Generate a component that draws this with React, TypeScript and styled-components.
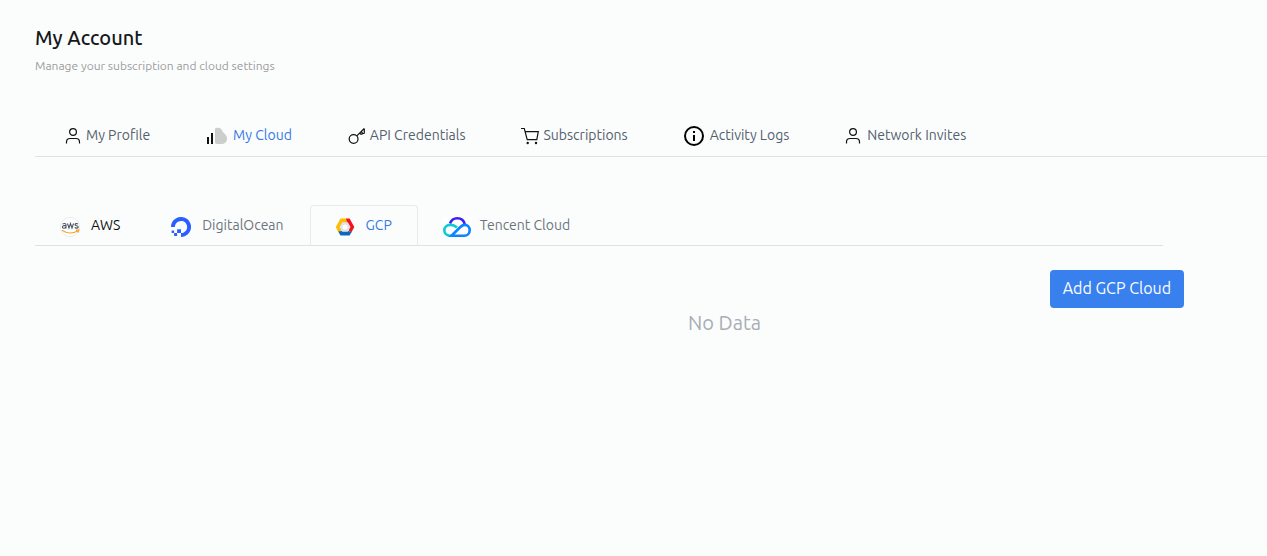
import React, { useState } from "react";
import styled, { createGlobalStyle } from "styled-components";

const GlobalStyle = createGlobalStyle`
  * { box-sizing: border-box; }
  body {
    margin: 0;
    background: #fbfdfd;
    color: #212529;
    font-family: Ubuntu, "Noto Sans", "Open Sans", sans-serif;
    font-size: 16px;
    line-height: 24px;
  }
  button { font-family: inherit; cursor: pointer; }
  svg { display: block; flex: none; }
`;

const Page = styled.main`
  padding: 24px 0 24px 35px;
`;

const Title = styled.h1`
  margin: 0;
  color: #16181b;
  font-size: 20px;
  font-weight: 500;
  line-height: 28px;
`;

const Subtitle = styled.p`
  margin: 5px 0 0;
  color: #9c9c9c;
  font-size: 12px;
  line-height: 18px;
`;

const AccountTabs = styled.nav`
  display: flex;
  gap: 56px;
  height: 42px;
  margin-top: 40px;
  padding-left: 30px;
  border-bottom: 1px solid #dee2e6;
`;

const AccountTab = styled.button<{ $active: boolean; $gap: number }>`
  display: flex;
  align-items: center;
  gap: ${(p) => p.$gap}px;
  height: 41px;
  padding: 0;
  border: 0;
  background: none;
  color: ${(p) => (p.$active ? "#3578e5" : "#55606d")};
  font-size: 14px;
  line-height: 20px;
  white-space: nowrap;
`;

const CloudTabs = styled.div`
  display: flex;
  margin: 48px 104px 0 0;
  border-bottom: 1px solid #dee2e6;
`;

const CloudTab = styled.button<{ $active: boolean; $color: string; $gap: number }>`
  display: flex;
  align-items: center;
  gap: ${(p) => p.$gap}px;
  height: 40px;
  padding: 0 25px 0 24px;
  border: 1px solid ${(p) => (p.$active ? "#e6e9ed" : "transparent")};
  border-bottom: 0;
  border-radius: 4px 4px 0 0;
  background: none;
  color: ${(p) => (p.$active ? "#3578e5" : p.$color)};
  font-size: 14px;
  line-height: 20px;
  white-space: nowrap;
`;

const IconSlot = styled.span<{ $drop: number }>`
  padding-top: ${(p) => p.$drop}px;
`;

const TabText = styled.span`
  padding-bottom: 1px;
`;

const Actions = styled.div`
  display: flex;
  justify-content: flex-end;
  margin: 24px 83px 0 0;
`;

const AddButton = styled.button`
  height: 38px;
  padding: 0 13px 2px;
  border: 0;
  border-radius: 4px;
  background: #3880ee;
  color: #fbfdfd;
  font-size: 16px;
  line-height: 24px;
  white-space: nowrap;
`;

const Empty = styled.p`
  margin: 0;
  padding-left: 147px;
  color: #a8aeb5;
  font-size: 20px;
  line-height: 30px;
  text-align: center;
`;

const UserIcon = () => (
  <svg width="16" height="16" viewBox="0 0 16 16" fill="none" stroke="#111" strokeWidth="1.2">
    <circle cx="8" cy="4" r="3.4" />
    <path d="M1.500 15.500v-1.500c0-2.200 1.200-3.500 3.500-3.500h6c2.300 0 3.500 1.300 3.500 3.500v1.500" />
  </svg>
);

const CloudIcon = () => (
  <svg width="21" height="18" viewBox="0 0 21 18">
    <path d="M1 10h2v7H1zM5 6h2v11H5z" fill="#111" />
    <path d="M9 2.200C9 .9 10.200.8 12.300.8c2.100 0 3.500 1.500 4 3 .3 1.100.8 1.600 1.800 2.400C20 7.700 21 9.400 21 11.500c0 3-2 5.500-5.200 5.500H11c-1.300 0-2-.7-2-2z" fill="#cdcdcd" />
  </svg>
);

const KeyIcon = () => (
  <svg width="18" height="18" viewBox="0 0 18 18" fill="none" stroke="#111" strokeWidth="1.2">
    <circle cx="5.600" cy="12" r="4.400" />
    <path d="M8.800 8.900 16.300 1.500M11.700 6l1.300 1.400 3.300-1.200V1.500M13.300 4.400l1.200 2" />
  </svg>
);

const CartIcon = () => (
  <svg width="18" height="18" viewBox="0 0 18 18" fill="none" stroke="#111" strokeWidth="1.200">
    <path d="M0 1.500h3.300l2.900 11.100h9.600L17.300 4.600H4.200" />
    <circle cx="6.700" cy="16" r="1.200" fill="#111" stroke="none" />
    <circle cx="15" cy="16" r="1.200" fill="#111" stroke="none" />
  </svg>
);

const InfoIcon = () => (
  <svg width="20" height="20" viewBox="0 0 20 20">
    <circle cx="10" cy="10" r="9" fill="none" stroke="#000" strokeWidth="2" />
    <path d="M9 5h2v2H9zM9 9h2v6H9z" />
  </svg>
);

const AwsIcon = () => (
  <svg width="20" height="20" viewBox="0 0 20 20">
    <circle cx="10" cy="10" r="9.600" fill="#fff" stroke="#dfe2e6" strokeWidth=".7" />
    <g fill="none" stroke="#4a5361" strokeWidth="1.100">
      <path d="M2.600 7.100C4 6.200 6 6.300 6 8v3.400M6 8.800c-2-.4-3.600 0-3.600 1.300 0 1.500 2.600 1.500 3.600 0" />
      <path d="m7.500 6.500 1.500 4.600 1.500-4.500 1.500 4.500 1.500-4.600" />
      <path d="M18 7c-1.200-.7-3-.6-3 .6 0 1.600 3.200.7 3.200 2.400 0 1.400-2.200 1.300-3.500.6" />
    </g>
    <path d="M2 13.200c4.800 3.400 11 3.400 15.500.8M16 13.100l2.800-.2-.8 2.700" fill="none" stroke="#f7a526" strokeWidth="1.300" />
  </svg>
);

const DigitalOceanIcon = () => (
  <svg width="20" height="20" viewBox="0 0 20 20" fill="#2b60ff">
    <path d="M10 20v-3.900c4.100 0 7.300-4.100 5.700-8.400a5.800 5.800 0 0 0-3.400-3.400C8 2.700 3.900 5.900 3.900 10H0C0 3.400 6.400-1.700 13.300.5c3 .9 5.300 3.300 6.200 6.200C21.700 13.600 16.600 20 10 20z" />
    <path d="M6.100 12.200H10v3.900H6.100zM3.100 16.100h3v3h-3zM.6 13.600h2.500v2.500H.6z" />
  </svg>
);

const GcpIcon = () => (
  <svg width="20" height="20" viewBox="0 0 20 20">
    <path d="M5.500 1.500h6L12 6H7.500L5.300 10l1.500 3.300-3.500 2L.800 10z" fill="#fdbd00" />
    <path d="M11 1.500h3.600L19.300 10l-3 5.500-3.100-2.500 1.600-3L12 5.600z" fill="#f2121b" />
    <path d="m3.200 14.500 3.300-.5h6.900l3.200 1-2 3.500H5.500z" fill="#0b68bb" />
    <path d="m7.200 5.300-2.700 4.700 2.700 4.700h5.600l2.700-4.700-2.700-4.700z" fill="#dfe3e6" />
    <circle cx="10" cy="10" r="2.600" fill="#fff" />
  </svg>
);

const TencentIcon = () => (
  <svg width="28" height="20" viewBox="0 0 28 20" fill="none" strokeWidth="2.600">
    <path d="M0 0h28v20H0z" fill="#fff" />
    <path d="M7 6.500C8.200 3.200 10.800 1.300 14.200 1.300c3.900 0 6.800 2.400 7.500 6" stroke="#3d1df5" />
    <path d="M14 10.500C12.300 9 10.300 7.900 7.400 7.900 3.700 7.900 1.300 10.300 1.300 13.300s2.400 5.400 5.700 5.400h2.500" stroke="#0ccbd7" />
    <path d="M8.500 18.700 17.400 10c1.300-1.300 2.600-2.100 4.300-2.100 2.900 0 5 2.300 5 5.300 0 3.200-2.200 5.500-5.400 5.500z" stroke="#0a86ff" />
  </svg>
);

const accountTabs = [
  { label: "My Profile", Icon: UserIcon, gap: 5 },
  { label: "My Cloud", Icon: CloudIcon, gap: 6 },
  { label: "API Credentials", Icon: KeyIcon, gap: 4 },
  { label: "Subscriptions", Icon: CartIcon, gap: 4 },
  { label: "Activity Logs", Icon: InfoIcon, gap: 6 },
  { label: "Network Invites", Icon: UserIcon, gap: 6 },
];

const cloudTabs = [
  { label: "AWS", Icon: AwsIcon, color: "#111", gap: 11 },
  { label: "DigitalOcean", Icon: DigitalOceanIcon, color: "#6c757d", gap: 11 },
  { label: "GCP", Icon: GcpIcon, color: "#6c757d", gap: 11 },
  { label: "Tencent Cloud", Icon: TencentIcon, color: "#6c757d", gap: 9 },
];

export default function App() {
  const [section, setSection] = useState("My Cloud");
  const [cloud, setCloud] = useState("GCP");

  return (
    <>
      <GlobalStyle />
      <Page>
        <Title>My Account</Title>
        <Subtitle>Manage your subscription and cloud settings</Subtitle>
        <AccountTabs aria-label="Account">
          {accountTabs.map(({ label, Icon, gap }) => (
            <AccountTab
              key={label}
              type="button"
              $active={section === label}
              $gap={gap}
              onClick={() => setSection(label)}
            >
              <IconSlot $drop={1}><Icon /></IconSlot>
              <TabText>{label}</TabText>
            </AccountTab>
          ))}
        </AccountTabs>
        <CloudTabs role="tablist">
          {cloudTabs.map(({ label, Icon, color, gap }) => (
            <CloudTab
              key={label}
              type="button"
              role="tab"
              aria-selected={cloud === label}
              $active={cloud === label}
              $color={color}
              $gap={gap}
              onClick={() => setCloud(label)}
            >
              <IconSlot $drop={3}><Icon /></IconSlot>
              <TabText>{label}</TabText>
            </CloudTab>
          ))}
        </CloudTabs>
        <Actions>
          <AddButton type="button">Add {cloud} Cloud</AddButton>
        </Actions>
        <Empty>No Data</Empty>
      </Page>
    </>
  );
}
